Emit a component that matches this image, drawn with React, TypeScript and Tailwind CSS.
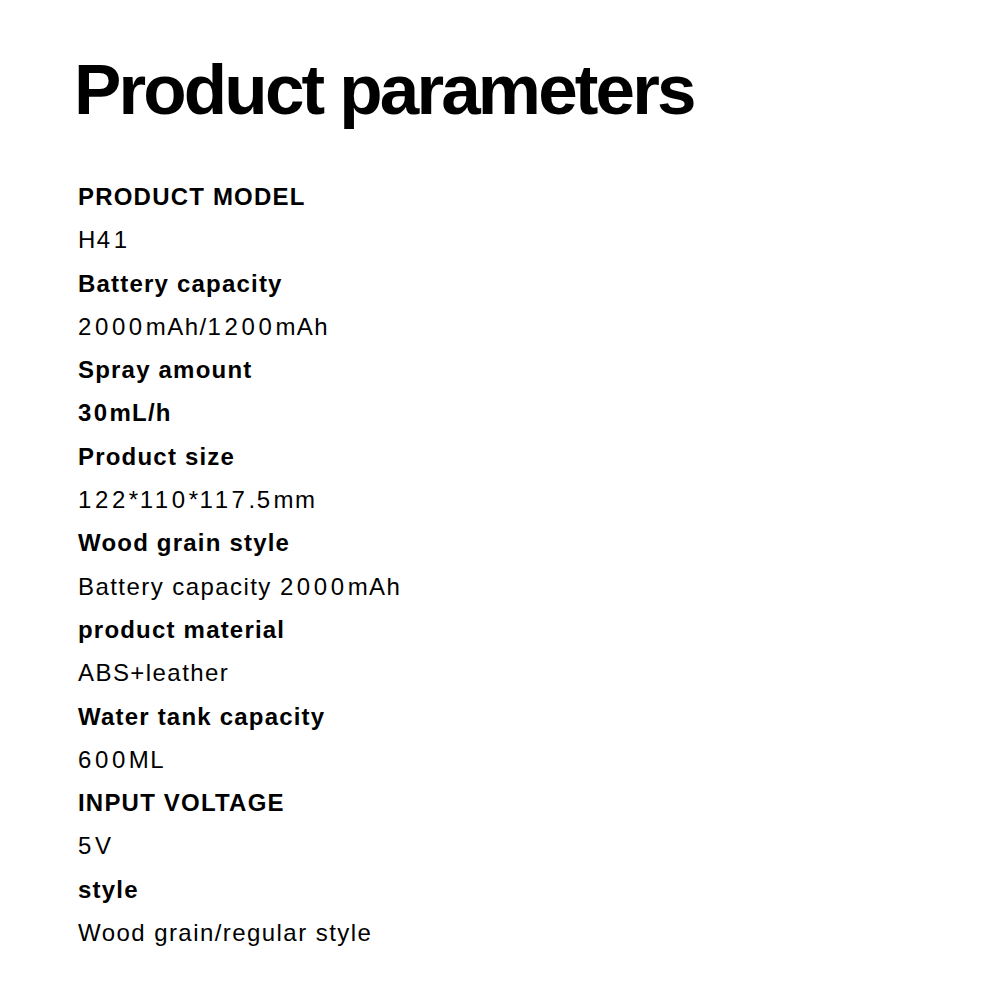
const rows: [string, boolean][] = [
  ["PRODUCT MODEL", true],
  ["H41", false],
  ["Battery capacity", true],
  ["2000mAh/1200mAh", false],
  ["Spray amount", true],
  ["30mL/h", true],
  ["Product size", true],
  ["122*110*117.5mm", false],
  ["Wood grain style", true],
  ["Battery capacity 2000mAh", false],
  ["product material", true],
  ["ABS+leather", false],
  ["Water tank capacity", true],
  ["600ML", false],
  ["INPUT VOLTAGE", true],
  ["5V", false],
  ["style", true],
  ["Wood grain/regular style", false],
];

// the source font has wide figures, so digit runs get a little more tracking
const Value = ({ text, digitClass }: { text: string; digitClass: string }) => (
  <>
    {text.split(/(\d+)/).map((part, i) =>
      /^\d+$/.test(part) ? (
        <span key={i} className={digitClass}>
          {part}
        </span>
      ) : (
        <span key={i}>{part}</span>
      )
    )}
  </>
);

export default function App() {
  return (
    <div className="w-[1000px] h-[1000px] bg-white text-black font-['Liberation_Sans',Arial,sans-serif]">
      <div className="pl-[74px] pt-[54px]">
        <h1 className="text-[71px] font-bold leading-none tracking-[-0.04em]">Product parameters</h1>
      </div>
      <div className="pl-[78px] pt-[50px] flex flex-col">
        {rows.map(([text, bold], i) => (
          <div
            key={i}
            className={
              bold
                ? "h-[43.3px] leading-[43.3px] text-[24px] font-bold tracking-[0.05em]"
                : "h-[43.3px] leading-[43.3px] text-[24px] tracking-[0.06em]"
            }
          >
            <Value text={text} digitClass={bold ? "tracking-[0.1em]" : "tracking-[0.15em]"} />
          </div>
        ))}
      </div>
    </div>
  );
}
